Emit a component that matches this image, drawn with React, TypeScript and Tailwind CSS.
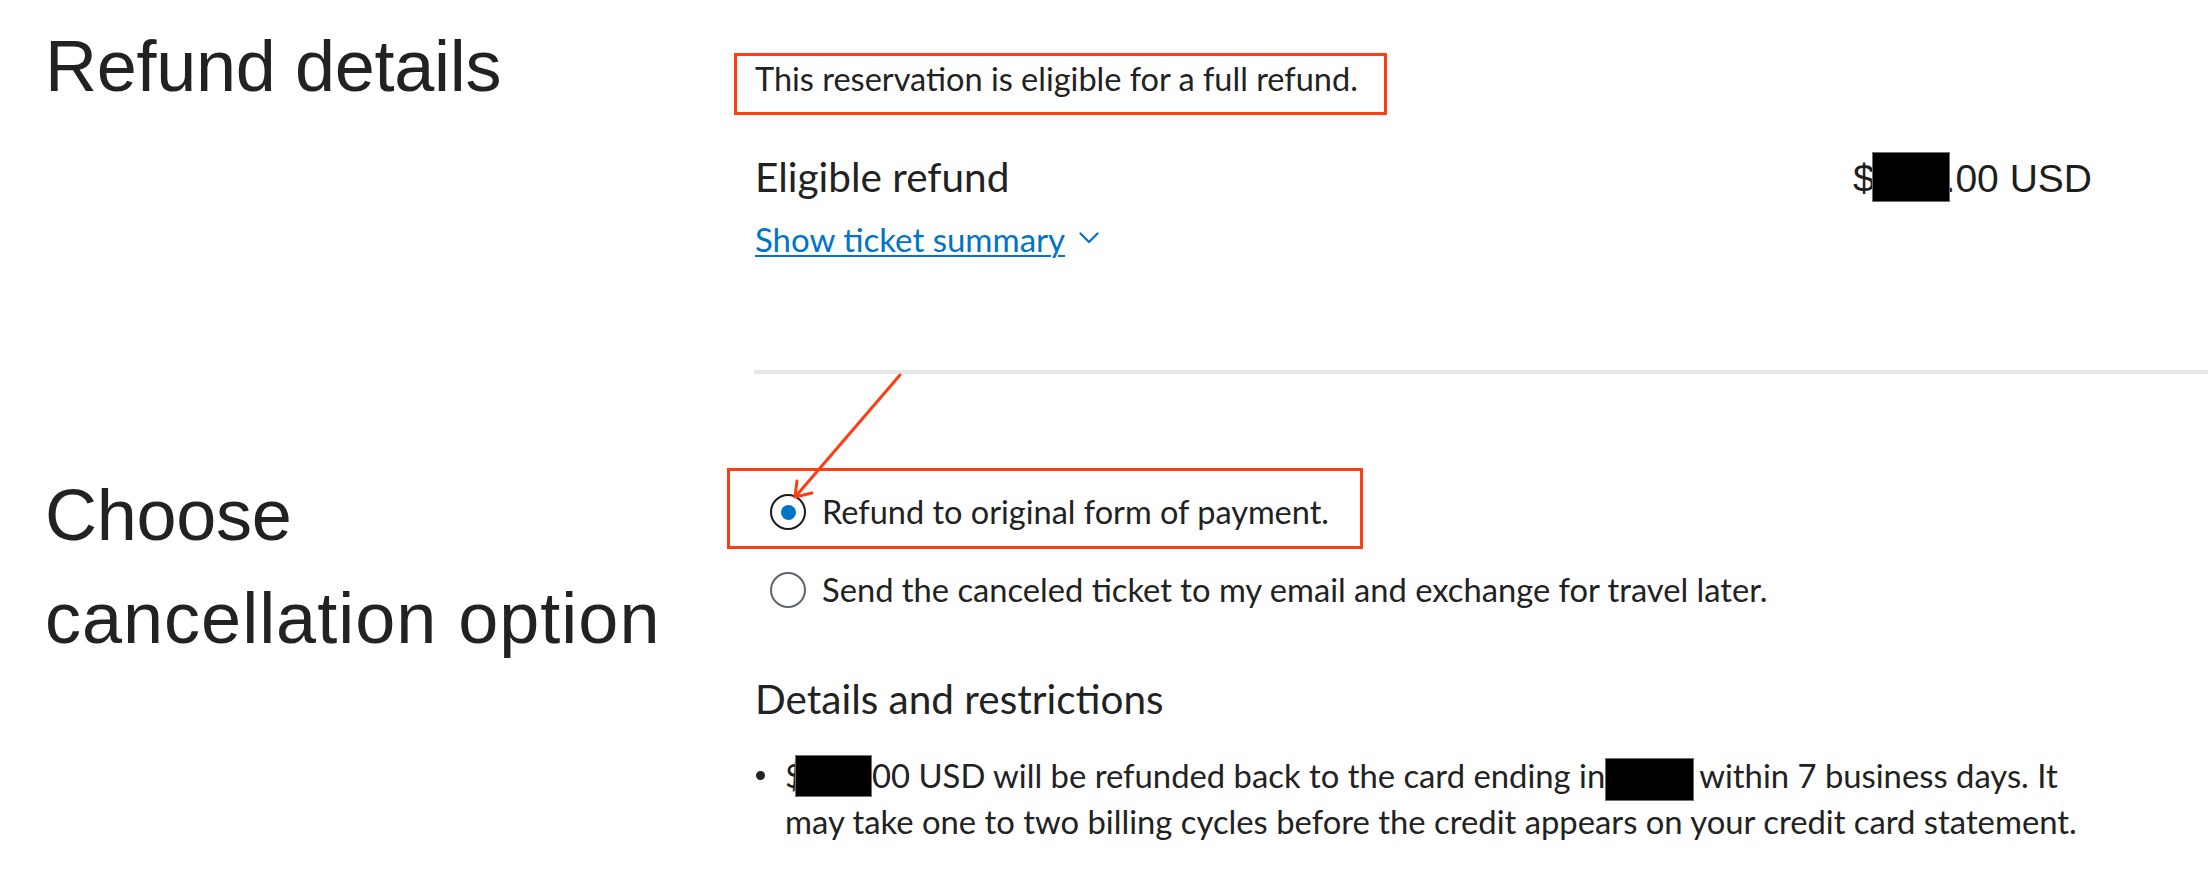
import React from "react";

const heading = "font-['Liberation_Sans',Arial,sans-serif] text-[72px] tracking-[-0.3px]";

function Redact({ wrap, box }: { wrap: string; box: string }) {
  return (
    <span className={`relative inline-block h-[20px] align-baseline ${wrap}`}>
      <span className={`absolute left-0 w-full bg-black border border-[#707070] ${box}`} />
    </span>
  );
}

function Radio({ checked = false }: { checked?: boolean }) {
  return (
    <span
      className={`flex h-[36px] w-[36px] shrink-0 items-center justify-center rounded-full border-2 ${
        checked ? "border-[#1c1c1c]" : "border-[#5d6670]"
      }`}
    >
      {checked && <span className="h-[15px] w-[15px] rounded-full bg-[#0074c8]" />}
    </span>
  );
}

export default function App() {
  return (
    <div className="relative min-h-[890px] overflow-hidden bg-white text-[#222] font-['Lato','Noto_Sans',sans-serif]">
      {/* Refund details */}
      <section className="flex">
        <div className="w-[755px] shrink-0 pl-[45px] pt-[23px]">
          <h2 className={`${heading} leading-[86px]`}>Refund details</h2>
        </div>
        <div className="flex-1 pt-[53px] pr-[116px]">
          <div className="-ml-[21px] w-fit border-[3px] border-[#ff3d12] pl-[18px] pr-[26px] pt-[1px] pb-[11px]">
            <p className="text-[32.5px] leading-[44px]">This reservation is eligible for a full refund.</p>
          </div>
          <div className="mt-[38px] flex items-baseline justify-between">
            <p className="text-[40.5px] leading-[48px]">Eligible refund</p>
            <p className="font-['Liberation_Sans',Arial,sans-serif] text-[39px] leading-[48px] text-[#1e1e1e]">
              $
              <Redact wrap="w-[78px] -ml-[3px] -mr-[5px]" box="bottom-[-10px] h-[50px]" />
              .00 USD
            </p>
          </div>
          <div className="mt-[16px] flex items-start gap-[14px] text-[33px] leading-[40px] text-[#0074c8] cursor-pointer">
            <span className="underline decoration-2 underline-offset-[3px]">Show ticket summary</span>
            <svg className="mt-[13px]" width="20" height="12" viewBox="0 0 20 12" fill="none">
              <polyline points="1.5,1.5 10,10 18.5,1.5" stroke="#0074c8" strokeWidth="2.2" strokeLinecap="round" strokeLinejoin="round" />
            </svg>
          </div>
        </div>
      </section>

      <div className="ml-[754px] mt-[111px] h-[4px] bg-[#e7e7e7]" />

      {/* Choose cancellation option */}
      <section className="flex">
        <div className="w-[755px] shrink-0 pl-[45px] pt-[90px]">
          <h2 className={`${heading} leading-[103px]`}>
            Choose
            <br />
            <span className="tracking-[1px]">cancellation option</span>
          </h2>
        </div>
        <div className="flex-1 pt-[94px] pr-[116px]">
          <label className="-ml-[28px] flex w-fit items-center border-[3px] border-[#ff3d12] pl-[40px] pr-[31px] pt-[23px] pb-[16px]">
            <Radio checked />
            <span className="ml-[16px] text-[32.5px] leading-[36px]">Refund to original form of payment.</span>
          </label>
          <label className="ml-[15px] mt-[23px] flex items-center">
            <Radio />
            <span className="ml-[16px] text-[32.7px] leading-[36px]">
              Send the canceled ticket to my email and exchange for travel later.
            </span>
          </label>

          <h3 className="mt-[67px] text-[40.5px] leading-[48px]">Details and restrictions</h3>
          <ul className="mt-[30px]">
            <li className="flex">
              <span className="ml-[1px] mt-[18px] h-[9px] w-[9px] shrink-0 rounded-full bg-[#222]" />
              <p className="ml-[20px] text-[32.8px] leading-[46px]">
                $
                <Redact wrap="w-[77px] -ml-[9px]" box="bottom-[-9px] h-[42px]" />
                00 USD will be refunded back to the card ending in
                <Redact wrap="w-[89px] mr-[5px]" box="bottom-[-13px] h-[43px]" />
                within 7 business days. It may take one to two billing cycles before the credit appears on your credit card statement.
              </p>
            </li>
          </ul>
        </div>
      </section>

      {/* annotation arrow */}
      <svg className="pointer-events-none absolute left-0 top-0" width="2208" height="890" fill="none">
        <line x1="900" y1="375" x2="796" y2="496" stroke="#ff3d12" strokeWidth="3" strokeLinecap="round" />
        <polyline points="797,481 795,497 812,493" stroke="#ff3d12" strokeWidth="3" strokeLinecap="round" strokeLinejoin="round" />
      </svg>
    </div>
  );
}
